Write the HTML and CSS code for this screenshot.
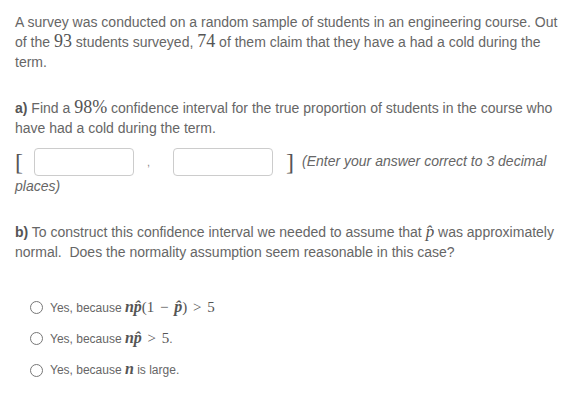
FILE: index.html
```html
<!DOCTYPE html>
<html>
<head>
<meta charset="utf-8">
<link rel="stylesheet" href="styles.css">
</head>
<body>
<div class="page">
  <p class="intro">A survey was conducted on a random sample of students in an engineering course. Out of the <span class="num">93</span> students surveyed, <span class="num">74</span> of them claim that they have a had a cold during the term.</p>

  <p class="part"><b>a)</b> Find a <span class="num">98%</span> confidence interval for the true proportion of students in the course who have had a cold during the term.</p>

  <p class="answer"><span class="bracket">[</span><span class="box"></span><span class="comma">,</span><span class="box"></span><span class="bracket">]</span><span class="hint">(Enter your answer correct to 3 decimal places)</span></p>

  <p class="partb"><b>b)</b> To construct this confidence interval we needed to assume that <span class="m">p&#770;</span> was approximately normal.&nbsp; Does the normality assumption seem reasonable in this case?</p>

  <div class="options">
    <label class="opt"><span class="radio"></span><span>Yes, because <span class="mi">np&#770;</span><span class="mr">(1 − </span><span class="mi">p&#770;</span><span class="mr">) &gt; 5</span></span></label>
    <label class="opt"><span class="radio"></span><span>Yes, because <span class="mi">np&#770;</span><span class="mr"> &gt; 5</span>.</span></label>
    <label class="opt"><span class="radio"></span><span>Yes, because <span class="mi">n</span> is large.</span></label>
  </div>
</div>
</body>
</html>
```

FILE: styles.css
```css
html, body {
  margin: 0;
  padding: 0;
  background: #ffffff;
}
.page {
  padding: 12px 22px 0 15px;
  font-family: "Liberation Sans", Arial, sans-serif;
  font-size: 14px;
  line-height: 20px;
  color: #666666;
}
p { margin: 0; }
.intro { margin-bottom: 26px; }
.num {
  font-family: "Liberation Serif", "DejaVu Serif", serif;
  font-size: 18px;
  line-height: 0;
  color: #555;
}
.part b, .partb b { color: #555; }
.answer {
  margin-top: 10px;
  line-height: 20px;
}
.bracket {
  display: inline-block;
  vertical-align: middle;
  font-family: "Liberation Serif", serif;
  font-size: 24px;
  line-height: 28px;
  color: #555;
}
.box {
  display: inline-block;
  vertical-align: middle;
  width: 98px;
  height: 26px;
  border: 1px solid #cccccc;
  border-radius: 4px;
  margin-left: 11px;
  margin-right: 13px;
  background: #fff;
}
.comma {
  display: inline-block;
  vertical-align: middle;
  width: 15px;
  color: #888;
  font-size: 11px;
}
.hint {
  font-style: italic;
  margin-left: 8px;
}
.partb { margin-top: 26px; }
.m, .mi {
  font-family: "Liberation Serif", "DejaVu Serif", serif;
  font-style: italic;
  font-size: 17px;
  line-height: 0;
  color: #555;
}
.mi { font-weight: bold; font-size: 16px; }
.mr {
  font-family: "Liberation Serif", "DejaVu Serif", serif;
  font-size: 15px;
  color: #555;
}
.mr { word-spacing: 2px; }
.options {
  margin-top: 35px;
  display: flex;
  flex-direction: column;
  gap: 11.5px;
  padding-left: 15px;
  font-size: 12px;
}
.opt {
  display: flex;
  align-items: center;
  gap: 7px;
  height: 20px;
}
.radio {
  width: 11px;
  height: 11px;
  border: 1px solid #777;
  border-radius: 50%;
  flex: none;
}
```
